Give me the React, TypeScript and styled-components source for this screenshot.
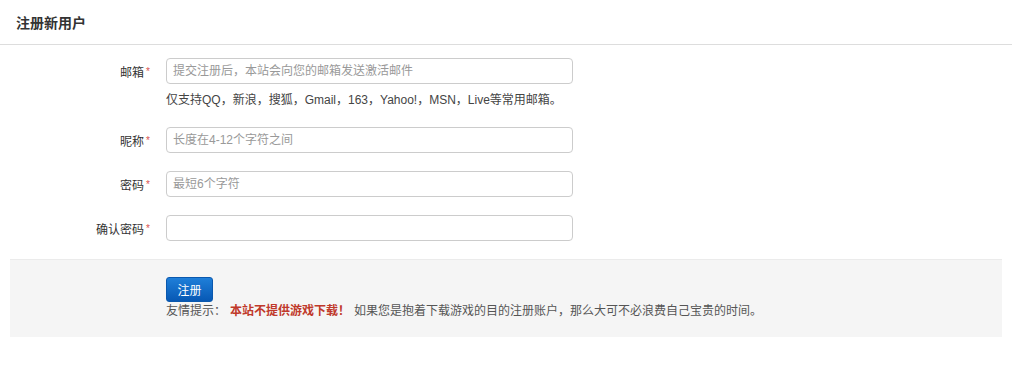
import styled, { createGlobalStyle } from 'styled-components';

const GlobalStyle = createGlobalStyle`
  body {
    margin: 0;
    background: #fff;
    font-family: "Liberation Sans", "Noto Sans CJK SC", sans-serif;
    font-size: 12px;
    color: #333;
  }
`;

const Page = styled.div`
  width: 1012px;
`;

const Header = styled.div`
  height: 44px;
  display: flex;
  align-items: center;
  padding-left: 16px;
  border-bottom: 1px solid #ddd;
  font-size: 14px;
  font-weight: bold;
  color: #333;
`;

const Form = styled.form`
  display: flex;
  flex-direction: column;
  gap: 18px;
  padding: 13px 0 18px;
`;

const Row = styled.div`
  display: grid;
  grid-template-columns: 150px 407px;
  column-gap: 16px;
  row-gap: 8px;
  align-items: center;
`;

const Label = styled.label`
  height: 26px;
  display: flex;
  align-items: center;
  justify-content: flex-end;
  color: #333;
`;

const Star = styled.span`
  color: #d9534f;
  font-size: 10px;
  line-height: 10px;
  margin-left: 2px;
  align-self: flex-start;
  margin-top: 9px;
`;

const Input = styled.input`
  display: block;
  box-sizing: border-box;
  height: 26px;
  width: 100%;
  padding: 0 6px;
  border: 1px solid #ccc;
  border-radius: 4px;
  font-family: inherit;
  font-size: 12px;
  color: #333;
  outline: none;

  &::placeholder {
    color: #999;
  }
`;

const Help = styled.div`
  grid-column: 2 / span 1;
  height: 17px;
  line-height: 17px;
  color: #444;
  white-space: nowrap;
`;

const Panel = styled.div`
  margin: 0 10px;
  padding: 17px 0 17px 156px;
  background: #f5f5f5;
  border-top: 1px solid #ebebeb;
  display: flex;
  flex-direction: column;
  align-items: flex-start;
`;

const SubmitButton = styled.button`
  box-sizing: border-box;
  width: 47px;
  height: 25px;
  padding: 0;
  border: 1px solid #0a58ae;
  border-radius: 3px;
  background: linear-gradient(#1f7fd9, #0758b4);
  color: #fff;
  font-family: inherit;
  font-size: 12px;
  cursor: pointer;
`;

const Tip = styled.p`
  margin: 1px 0 0;
  line-height: 17px;
  color: #555;
  white-space: nowrap;
`;

const Warn = styled.strong`
  color: #c0392b;
  margin: 0 4px;
`;

const fields = [
  { label: '邮箱', type: 'email', placeholder: '提交注册后，本站会向您的邮箱发送激活邮件', help: '仅支持QQ，新浪，搜狐，Gmail，163，Yahoo!，MSN，Live等常用邮箱。' },
  { label: '昵称', type: 'text', placeholder: '长度在4-12个字符之间' },
  { label: '密码', type: 'password', placeholder: '最短6个字符' },
  { label: '确认密码', type: 'password', placeholder: '' },
];

function App() {
  return (
    <Page>
      <GlobalStyle />
      <Header>注册新用户</Header>
      <Form onSubmit={(e) => e.preventDefault()}>
        {fields.map((f) => (
          <Row key={f.label}>
            <Label>
              {f.label}
              <Star>*</Star>
            </Label>
            <Input type={f.type} placeholder={f.placeholder} />
            {f.help && <Help>{f.help}</Help>}
          </Row>
        ))}
      </Form>
      <Panel>
        <SubmitButton type="button">注册</SubmitButton>
        <Tip>
          友情提示：
          <Warn>本站不提供游戏下载！</Warn>
          如果您是抱着下载游戏的目的注册账户，那么大可不必浪费自己宝贵的时间。
        </Tip>
      </Panel>
    </Page>
  );
}

export default App;
